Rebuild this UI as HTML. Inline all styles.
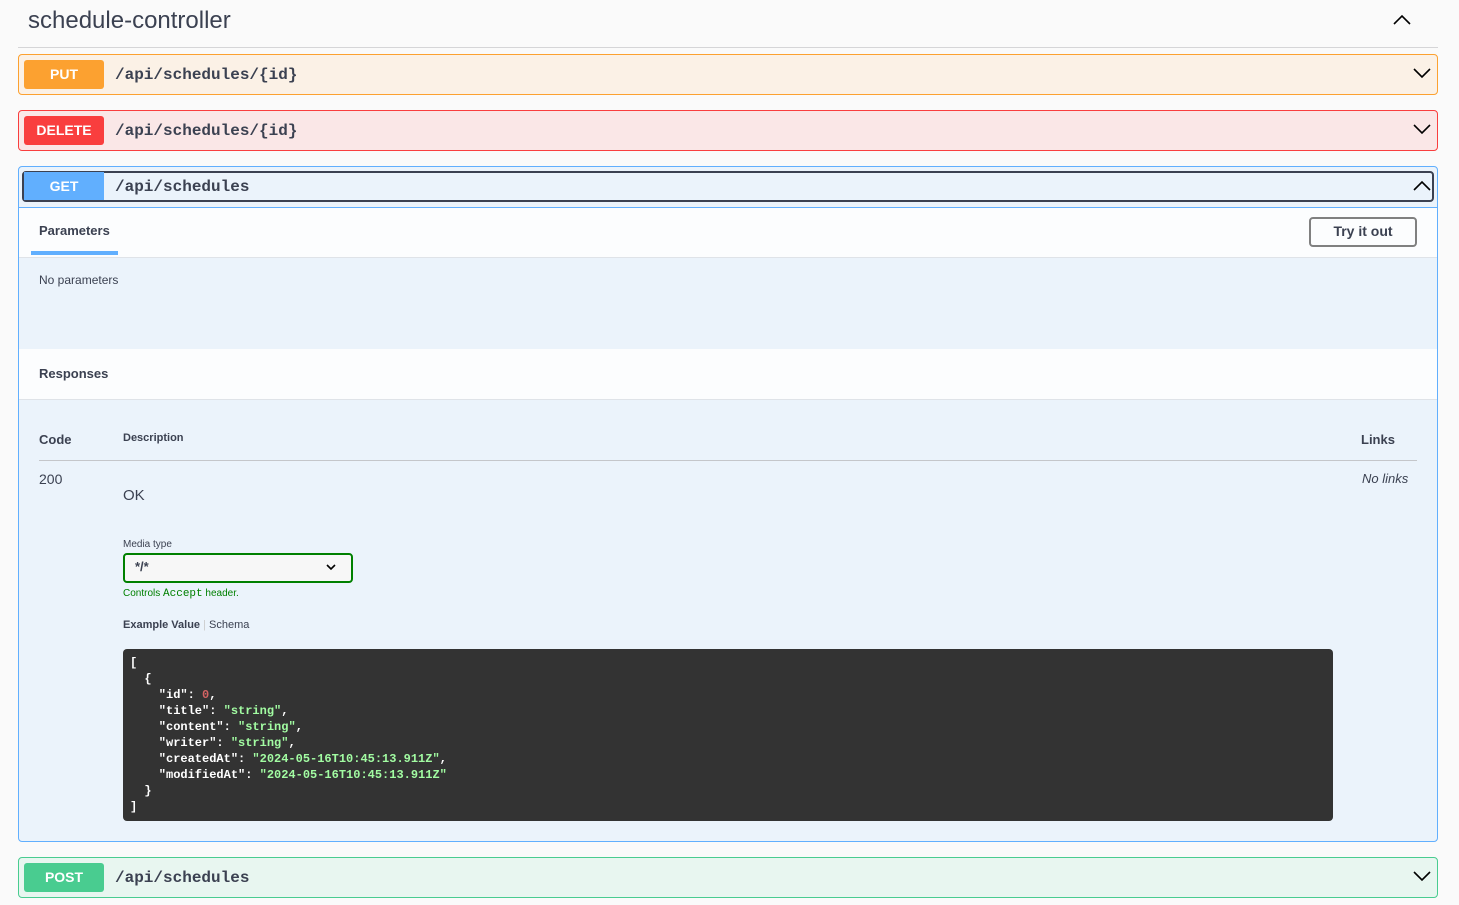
<!DOCTYPE html>
<html><head><meta charset="utf-8"><style>
*{box-sizing:border-box;margin:0;padding:0}
body{width:1459px;height:905px;overflow:hidden;background:#fafafa;font-family:"Liberation Sans",sans-serif;color:#3b4151;position:relative}
.abs{position:absolute}
.h{left:28px;top:7px;font-size:24px;color:#3b4151}
.hr{left:18px;top:47px;width:1420px;height:1px;background:#d5d5d7}
.op{position:absolute;left:18px;width:1420px;border:1px solid;border-radius:4px}
.bar{height:40px;position:relative}
.m{position:absolute;left:5px;top:5px;width:80px;height:29px;border-radius:3px;color:#fff;font-weight:bold;font-size:14px;text-align:center;line-height:29px}
.p{position:absolute;left:96px;top:11px;font-family:"Liberation Mono",monospace;font-weight:bold;font-size:16px;color:#3b4151}
.chev{position:absolute;right:6px;top:12px}
.mono{font-family:"Liberation Mono",monospace}
</style></head><body>
<div class="abs h">schedule-controller</div>
<svg class="abs" style="left:1393px;top:14px" width="18" height="12"><path d="M1 10 L9 2 L17 10" stroke="#000" stroke-width="1.6" fill="none"/></svg>
<div class="abs hr"></div>

<div class="op" style="top:54px;height:41px;background:#fbf1e6;border-color:#fca130"><div class="bar"><div class="m" style="background:#fca130">PUT</div><div class="p">/api/schedules/{id}</div><svg class="chev" width="18" height="12"><path d="M1 2 L9 10 L17 2" stroke="#000" stroke-width="1.6" fill="none"/></svg></div></div>
<div class="op" style="top:110px;height:41px;background:#fae7e7;border-color:#f93e3e"><div class="bar"><div class="m" style="background:#f93e3e">DELETE</div><div class="p">/api/schedules/{id}</div><svg class="chev" width="18" height="12"><path d="M1 2 L9 10 L17 2" stroke="#000" stroke-width="1.6" fill="none"/></svg></div></div>

<div class="op" style="top:166px;height:676px;background:#ebf3fb;border-color:#61affe">
 <div style="position:absolute;left:3px;top:4px;width:1412px;height:31px;border:2px solid #3b4151;border-radius:4px"></div>
 <div class="m" style="background:#61affe;left:5px;top:5px;height:28px;line-height:28px;border-radius:0">GET</div>
 <div class="p" style="top:11px">/api/schedules</div>
 <svg class="chev" style="top:13px" width="18" height="12"><path d="M1 10 L9 2 L17 10" stroke="#000" stroke-width="1.6" fill="none"/></svg>
 <div style="position:absolute;left:0;top:40px;width:1418px;height:1px;background:#61affe"></div>
 <div style="position:absolute;left:0;top:41px;width:1418px;height:50px;background:#fcfdfe;border-bottom:1px solid #dfe3e8"></div>
 <div class="abs" style="left:20px;top:56px;font-size:13px;font-weight:bold">Parameters</div>
 <div class="abs" style="left:12px;top:84px;width:87px;height:4px;background:#61affe"></div>
 <div class="abs" style="left:1290px;top:50px;width:108px;height:30px;border:2px solid #808080;border-radius:4px;font-size:14px;font-weight:bold;text-align:center;line-height:25px">Try it out</div>
 <div class="abs" style="left:20px;top:106px;font-size:12px">No parameters</div>
 <div style="position:absolute;left:0;top:182px;width:1418px;height:51px;background:#fcfdfe;border-bottom:1px solid #dfe3e8"></div>
 <div class="abs" style="left:20px;top:199px;font-size:13px;font-weight:bold">Responses</div>
 <div class="abs" style="left:20px;top:265px;font-size:13px;font-weight:bold">Code</div>
 <div class="abs" style="left:104px;top:265px;font-size:11px;font-weight:bold">Description</div>
 <div class="abs" style="left:1342px;top:265px;font-size:13px;font-weight:bold">Links</div>
 <div class="abs" style="left:20px;top:293px;width:1378px;height:1px;background:#c4c6ca"></div>
 <div class="abs" style="left:20px;top:304px;font-size:14px">200</div>
 <div class="abs" style="left:104px;top:320px;font-size:15px">OK</div>
 <div class="abs" style="left:1343px;top:304px;font-size:13px;font-style:italic">No links</div>
 <div class="abs" style="left:104px;top:372px;font-size:10px">Media type</div>
 <div class="abs" style="left:104px;top:386px;width:230px;height:30px;border:2px solid #008000;border-radius:4px;background:#f7f7f7;font-size:13px;font-weight:bold;padding:4px 10px">*/*</div>
 <svg class="abs" style="left:307px;top:397px" width="10" height="7"><path d="M1 1 L5 5 L9 1" stroke="#000" stroke-width="1.6" fill="none"/></svg>
 <div class="abs" style="left:104px;top:421px;font-size:10px;color:#008000">Controls <span class="mono" style="font-size:11px">Accept</span> header.</div>
 <div class="abs" style="left:104px;top:452px;font-size:11px"><b>Example Value</b> <span style="color:#ccc">|</span> Schema</div>
 <div class="abs mono" style="left:104px;top:482px;width:1210px;height:172px;background:#333;border-radius:4px;color:#fff;font-size:12px;font-weight:bold;line-height:16px;padding:6px 7px;white-space:pre">[
  {
    "id": <span style="color:#d36363">0</span>,
    "title": <span style="color:#a2fca2">"string"</span>,
    "content": <span style="color:#a2fca2">"string"</span>,
    "writer": <span style="color:#a2fca2">"string"</span>,
    "createdAt": <span style="color:#a2fca2">"2024-05-16T10:45:13.911Z"</span>,
    "modifiedAt": <span style="color:#a2fca2">"2024-05-16T10:45:13.911Z"</span>
  }
]</div>
</div>

<div class="op" style="top:857px;height:41px;background:#e8f6f0;border-color:#49cc90"><div class="bar"><div class="m" style="background:#49cc90">POST</div><div class="p">/api/schedules</div><svg class="chev" width="18" height="12"><path d="M1 2 L9 10 L17 2" stroke="#000" stroke-width="1.6" fill="none"/></svg></div></div>
</body></html>
